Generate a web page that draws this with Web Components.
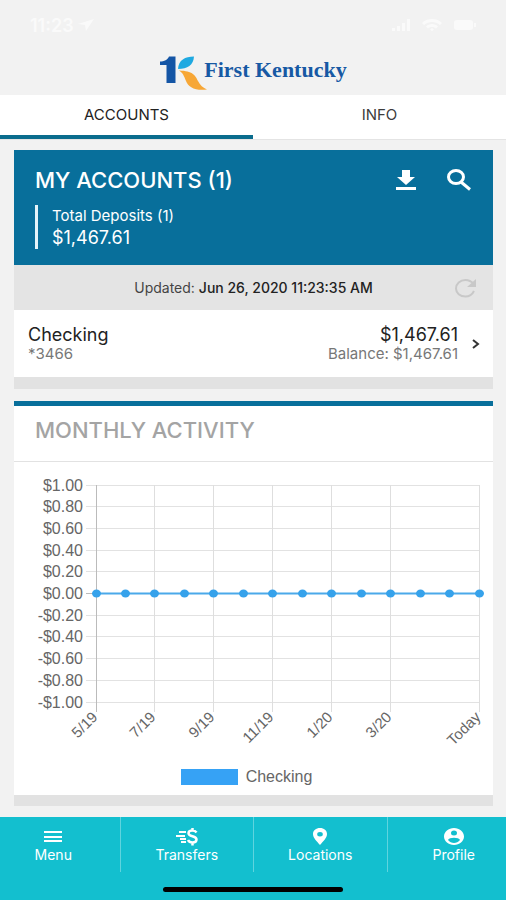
<!DOCTYPE html>
<html lang="en">
<head>
<meta charset="utf-8">
<meta name="viewport" content="width=device-width, initial-scale=1">
<title>First Kentucky</title>
<style>
  * {
    box-sizing: border-box;
  }

  body {
    margin: 0;
    background-color: #f2f2f2;
    color: #333;
    font-family: Inter, Roboto, sans-serif;
  }
</style>
</head>
<body>
<bank-app></bank-app>

<script>
class StatusBar extends HTMLElement {
  constructor () {
    super()
    this.shadow = this.attachShadow({ mode: 'open' })
  }

  connectedCallback () {
    this.render()
  }

  render () {
    this.shadow.innerHTML =
      /* html */`
      <style>
        :host {
          display: flex;
          justify-content: space-between;
          align-items: center;
          height: 50px;
          padding: 0 30px;
          color: #fafafa;
          font-size: 18px;
          font-weight: 600;
        }

        div {
          display: flex;
          align-items: center;
          gap: 4px;
        }

        .signals {
          gap: 12px;
        }

        svg {
          display: block;
          fill: currentColor;
        }
      </style>

      <div>
        <span>11:23</span>
        <svg width="16" height="12" viewBox="0 0 16 12"><path d="M16 0 L8 12 L7 6 L0 5 Z"/></svg>
      </div>
      <div class="signals">
        <svg width="18" height="12" viewBox="0 0 18 12"><path d="M0 9h3v3H0zM5 7h3v5H5zM10 4h3v8h-3zM15 0h3v12h-3z"/></svg>
        <svg width="20" height="12" viewBox="0 0 20 12"><path d="M10 0c4 0 7.500 1.500 10 4l-2 2c-4.500-4-11.500-4-16 0L0 4c2.500-2.500 6-4 10-4zM10 5c2.500 0 4.500 1 6 2.500l-2 2c-2-2-6-2-8 0l-2-2C5.500 6 7.500 5 10 5zM10 9l2 1.500-2 1.500-2-1.500z"/></svg>
        <svg width="22" height="10" viewBox="0 0 22 10"><rect width="19" height="10" rx="3"/><rect x="20" y="3" width="2" height="4"/></svg>
      </div>
      `
  }
}

customElements.define('status-bar', StatusBar)

class BankLogo extends HTMLElement {
  constructor () {
    super()
    this.shadow = this.attachShadow({ mode: 'open' })
  }

  connectedCallback () {
    this.render()
  }

  render () {
    this.shadow.innerHTML =
      /* html */`
      <style>
        :host {
          display: flex;
          justify-content: center;
          align-items: center;
          height: 45px;
        }

        /* the orange leaf reaches under the name */
        svg {
          display: block;
          margin-right: -3px;
        }

        span {
          padding-bottom: 6px;
          color: #1759a4;
          font-family: "Liberation Serif", serif;
          font-size: 22px;
          font-weight: bold;
          line-height: 24px;
        }
      </style>

      <svg width="48" height="34" viewBox="0 0 48 34" aria-hidden="true">
        <path fill="#1455a5" d="M10 0.500h6.500V27H7.500V9H1V5.500C5 5.500 9 3.500 10 .5z"/>
        <path fill="#1fa9e1" d="M19 13C19.500 4 26 .5 35 .5C34.500 9 28.500 13 19 13z"/>
        <path fill="#f7a736" d="M20 14.500C34 15 36 19 39 25C41 29 44 32 48 33.500C36 35 29 31 27 25C25 20 24 17 20 14.500z"/>
      </svg>
      <span><slot></slot></span>
      `
  }
}

customElements.define('bank-logo', BankLogo)

class TabBar extends HTMLElement {
  constructor () {
    super()
    this.shadow = this.attachShadow({ mode: 'open' })
  }

  connectedCallback () {
    this.render()
  }

  render () {
    this.shadow.innerHTML =
      /* html */`
      <style>
        :host {
          display: flex;
          background-color: #fff;
          border-bottom: 1px solid #e4e4e4;
        }

        button {
          flex: 1;
          height: 44px;
          padding: 0 0 2px;
          border: none;
          border-bottom: 4px solid transparent;
          background: none;
          color: #3c3c3c;
          font: inherit;
          font-size: 15px;
          cursor: pointer;
        }

        button[aria-selected="true"] {
          border-color: #0a6c8d;
          color: #222;
        }
      </style>

      <button role="tab" aria-selected="true">ACCOUNTS</button>
      <button role="tab" aria-selected="false">INFO</button>
      `
  }
}

customElements.define('tab-bar', TabBar)

class AccountsCard extends HTMLElement {
  constructor () {
    super()
    this.shadow = this.attachShadow({ mode: 'open' })
  }

  connectedCallback () {
    this.render()
  }

  render () {
    this.shadow.innerHTML =
      /* html */`
      <style>
        :host {
          display: block;
          background-color: #fff;
          border-bottom: 12px solid #e2e2e2;
        }

        header {
          padding: 16px 21px;
          background-color: #086f9b;
          color: #fff;
        }

        .heading {
          display: flex;
          justify-content: space-between;
          align-items: center;
          height: 27px;
        }

        h2 {
          margin: 0;
          font-size: 22px;
          font-weight: 500;
        }

        .actions {
          display: flex;
          gap: 30px;
        }

        button {
          padding: 0;
          border: none;
          background: none;
          color: inherit;
          font: inherit;
          cursor: pointer;
        }

        svg {
          display: block;
          fill: currentColor;
        }

        .total {
          margin-top: 12px;
          padding-left: 14px;
          border-left: 3px solid #e4f4fa;
          line-height: 22px;
          font-size: 15px;
        }

        .total p {
          margin: 0;
        }

        .total .amount {
          font-size: 18px;
        }

        .updated {
          display: flex;
          align-items: center;
          height: 45px;
          padding: 0 15px;
          background-color: #e4e4e4;
          color: #444;
          font-size: 14px;
        }

        .updated p {
          flex: 1;
          margin: 0;
          padding-left: 24px;
          text-align: center;
        }

        .updated strong {
          color: #222;
          font-weight: 500;
        }

        .updated button {
          color: #c8c8c8;
        }

        .account {
          display: flex;
          align-items: center;
          width: 100%;
          height: 67px;
          padding: 0 13px 0 14px;
          text-align: left;
          color: #777;
          font-size: 15px;
          line-height: 18px;
        }

        .account span {
          display: block;
        }

        .account .main {
          color: #222;
          font-size: 18px;
          line-height: 20px;
        }

        .balance {
          flex: 1;
          padding-right: 14px;
          text-align: right;
        }
      </style>

      <header>
        <div class="heading">
          <h2>MY ACCOUNTS (1)</h2>
          <div class="actions">
            <button aria-label="Download">
              <svg width="20" height="22" viewBox="1 0 20 22"><path d="M7 1h8v7h5l-9 8-9-8h5zM1 18h20v3H1z"/></svg>
            </button>
            <button aria-label="Search">
              <svg width="26" height="22" viewBox="0 0 26 22"><g fill="none" stroke="currentColor" stroke-width="3"><ellipse cx="10" cy="8" rx="7.500" ry="6.500"/><path d="M15 13l9 7.500"/></g></svg>
            </button>
          </div>
        </div>
        <div class="total">
          <p>Total Deposits (1)</p>
          <p class="amount">$1,467.61</p>
        </div>
      </header>
      <div class="updated">
        <p>Updated: <strong>Jun 26, 2020 11:23:35 AM</strong></p>
        <button aria-label="Refresh">
          <svg width="24" height="20" viewBox="0 0 24 20"><path fill="none" stroke="currentColor" stroke-width="2" d="M20 13C18 17 15 18.500 11.500 18.500C6 18.500 2 15 2 10.500S6 2 11.500 2C15 2 17.500 3.500 20 6"/><path d="M22 1v8h-9z"/></svg>
        </button>
      </div>
      <button class="account">
        <span>
          <span class="main">Checking</span>
          <span>*3466</span>
        </span>
        <span class="balance">
          <span class="main">$1,467.61</span>
          <span>Balance: $1,467.61</span>
        </span>
        <svg width="8" height="10" viewBox="0 0 8 10"><path fill="none" stroke="#333" stroke-width="2" d="M1 1l5 4-5 4"/></svg>
      </button>
      `
  }
}

customElements.define('accounts-card', AccountsCard)

class ActivityChart extends HTMLElement {
  constructor () {
    super()
    this.shadow = this.attachShadow({ mode: 'open' })
    this.left = 82
    this.right = 465
    this.top = 23
    this.bottom = 240
    this.months = ['5/19', '', '7/19', '', '9/19', '', '11/19', '', '1/20', '', '3/20', '', '', 'Today']
    this.amounts = ['$1.00', '$0.80', '$0.60', '$0.40', '$0.20', '$0.00', '-$0.20', '-$0.40', '-$0.60', '-$0.80', '-$1.00']
  }

  connectedCallback () {
    this.render()
  }

  // half pixels keep the 1px grid lines sharp
  getX (index) {
    return Math.floor(this.left + index * (this.right - this.left) / (this.months.length - 1)) + 0.5
  }

  getY (index) {
    return Math.floor(this.top + index * (this.bottom - this.top) / (this.amounts.length - 1)) + 0.5
  }

  renderRows () {
    return this.amounts.map((amount, index) => {
      const y = this.getY(index)
      const color = amount === '$0.00' ? '#bbb' : '#e2e2e2'

      return `
        <line x1="${this.left - 10}" x2="${this.right}" y1="${y}" y2="${y}" stroke="${color}"/>
        <text x="${this.left - 13}" y="${y + 5}">${amount}</text>`
    }).join('')
  }

  renderColumns () {
    return this.months.map((month, index) => {
      if (!month) return ''

      const x = this.getX(index)
      const color = index === 0 ? '#bbb' : '#dedede'

      return `
        <line x1="${x}" x2="${x}" y1="${this.top}" y2="${this.bottom + 10}" stroke="${color}"/>
        <text class="month" transform="translate(${x + 2} ${this.bottom + 16}) rotate(-45)">${month}</text>`
    }).join('')
  }

  renderPoints () {
    const y = this.getY(5)

    return this.months.map((month, index) => {
      return `<ellipse cx="${this.getX(index)}" cy="${y}" rx="4.500" ry="4"/>`
    }).join('')
  }

  render () {
    const y = this.getY(5)

    this.shadow.innerHTML =
      /* html */`
      <style>
        :host {
          display: block;
          color: #666;
          font-family: "Liberation Sans", sans-serif;
          font-size: 16px;
        }

        svg {
          display: block;
          width: 100%;
        }

        text {
          fill: currentColor;
          text-anchor: end;
        }

        .month {
          font-size: 15px;
        }

        .legend {
          display: flex;
          justify-content: center;
          align-items: center;
          gap: 8px;
          padding: 6px 14px 8px 0;
          line-height: 20px;
        }

        .swatch {
          width: 57px;
          height: 16px;
          background-color: #36a2f5;
        }
      </style>

      <svg viewBox="0 0 479 299" role="img" aria-label="Monthly activity">
        ${this.renderRows()}
        ${this.renderColumns()}
        <line x1="${this.left}" x2="${this.right}" y1="${y}" y2="${y}" stroke="#4ba9ea" stroke-width="2"/>
        <g fill="#36a2eb">${this.renderPoints()}</g>
      </svg>
      <div class="legend">
        <span class="swatch"></span>
        <span>Checking</span>
      </div>
      `
  }
}

customElements.define('activity-chart', ActivityChart)

class ActivityCard extends HTMLElement {
  constructor () {
    super()
    this.shadow = this.attachShadow({ mode: 'open' })
  }

  connectedCallback () {
    this.render()
  }

  render () {
    this.shadow.innerHTML =
      /* html */`
      <style>
        :host {
          display: block;
          background-color: #fff;
          border-top: 5px solid #086f9b;
          border-bottom: 11px solid #e2e2e2;
        }

        h2 {
          margin: 0;
          padding: 11px 21px 18px;
          border-bottom: 1px solid #e2e2e2;
          color: #a4a4a4;
          font-size: 22px;
          font-weight: 500;
          line-height: 26px;
        }
      </style>

      <h2>MONTHLY ACTIVITY</h2>
      <slot></slot>
      `
  }
}

customElements.define('activity-card', ActivityCard)

class NavItem extends HTMLElement {
  constructor () {
    super()
    this.shadow = this.attachShadow({ mode: 'open' })
  }

  connectedCallback () {
    this.render()
  }

  render () {
    this.shadow.innerHTML =
      /* html */`
      <style>
        :host {
          display: block;
          flex: 1;
          border-left: 1px solid #5fd4de;
        }

        button {
          display: flex;
          flex-direction: column;
          align-items: center;
          width: 100%;
          height: 55px;
          padding: 10px 0 0;
          border: none;
          background: none;
          color: #fff;
          font: inherit;
          font-size: 14px;
          line-height: 18px;
          cursor: pointer;
        }
      </style>

      <button>
        <slot name="icon"></slot>
        <slot></slot>
      </button>
      `
  }
}

customElements.define('nav-item', NavItem)

class BottomNav extends HTMLElement {
  constructor () {
    super()
    this.shadow = this.attachShadow({ mode: 'open' })
  }

  connectedCallback () {
    this.render()
  }

  render () {
    this.shadow.innerHTML =
      /* html */`
      <style>
        :host {
          display: block;
          overflow: hidden;
          background-color: #13bfcf;
        }

        /* the outer items run past the screen edges */
        nav {
          display: flex;
          margin: 0 -14px;
        }

        svg {
          display: block;
          height: 19px;
          fill: currentColor;
        }

        .home {
          width: 180px;
          height: 5px;
          margin: 15px auto 8px;
          border-radius: 3px;
          background-color: #000;
        }
      </style>

      <nav>
        <nav-item>
          <svg slot="icon" width="18" viewBox="0 0 18 19"><path d="M0 4h18v2H0zM0 9h18v2H0zM0 13h18v2H0z"/></svg>
          Menu
        </nav-item>
        <nav-item>
          <svg slot="icon" width="22" viewBox="0 0 22 19"><path d="M3 4h7v2H3zM0 8h9v2H0zM4 11h6v2H4zM5 14h5v2H5z"/><path fill="none" stroke="currentColor" stroke-width="2.500" d="M20.500 5.500C19.500 4 18 3.500 16.500 3.500C14 3.500 12.500 4.500 12.500 6.200C12.500 10 20.500 8.500 20.500 12.500C20.500 14.500 18.800 15.500 16.500 15.500C14.500 15.500 13 15 12 13M16.500 1v3M16.500 15v3.500"/></svg>
          Transfers
        </nav-item>
        <nav-item>
          <svg slot="icon" width="14" viewBox="0 0 14 19"><path fill-rule="evenodd" d="M7 1c4 0 7 2.500 7 6 0 4-4 7.500-7 11C4 14.500 0 11 0 7c0-3.500 3-6 7-6zM7 5a2.500 2 0 1 0 0 4.500A2.500 2 0 1 0 7 5z"/></svg>
          Locations
        </nav-item>
        <nav-item>
          <svg slot="icon" width="20" viewBox="0 0 20 19"><path fill-rule="evenodd" d="M10 1c5.500 0 10 3.700 10 8.500S15.500 18 10 18 0 14.300 0 9.500 4.500 1 10 1zM10 3.500a3 2.500 0 1 0 0 5 3 2.500 0 1 0 0-5zM4 13c3 4 9 4 12 0-1-3-11-3-12 0z"/></svg>
          Profile
        </nav-item>
      </nav>
      <div class="home"></div>
      `
  }
}

customElements.define('bottom-nav', BottomNav)

class BankApp extends HTMLElement {
  constructor () {
    super()
    this.shadow = this.attachShadow({ mode: 'open' })
  }

  connectedCallback () {
    this.render()
  }

  render () {
    this.shadow.innerHTML =
      /* html */`
      <style>
        :host {
          display: flex;
          flex-direction: column;
          min-height: 100vh;
        }

        main {
          display: flex;
          flex: 1;
          flex-direction: column;
          gap: 12px;
          padding: 10px 13px 11px 14px;
        }
      </style>

      <status-bar></status-bar>
      <bank-logo>First Kentucky</bank-logo>
      <tab-bar role="tablist"></tab-bar>
      <main>
        <accounts-card></accounts-card>
        <activity-card>
          <activity-chart></activity-chart>
        </activity-card>
      </main>
      <bottom-nav></bottom-nav>
      `
  }
}

customElements.define('bank-app', BankApp)
</script>
</body>
</html>
